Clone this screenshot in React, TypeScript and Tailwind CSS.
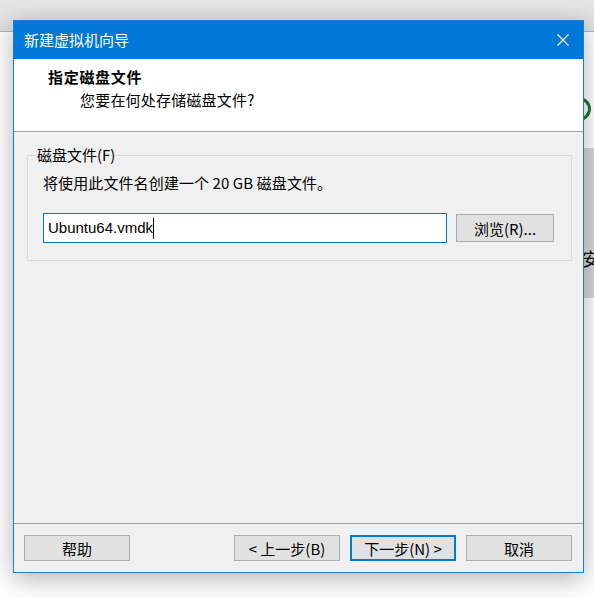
export default function App() {
  const btn =
    "h-[26px] w-[106px] flex items-center justify-center bg-[#e1e1e1] border border-[#adadad] text-[15px] text-black leading-none";
  return (
    <div className="relative w-[594px] h-[598px] overflow-hidden bg-white font-['Noto_Sans_CJK_SC','Microsoft_YaHei',sans-serif]">
      {/* background application */}
      <div className="h-[32px] bg-gradient-to-b from-[#e6e6e6] to-[#dedede] border-b border-[#a3b8cc]" />
      <div className="flex justify-end">
        <div className="w-[28px] flex flex-col">
          <div className="h-[65px]" />
          <div className="ml-[1px] w-[24px] h-[24px] rounded-full border-[3px] border-[#1f7a3d]" />
          <div className="h-[27px]" />
          <div className="h-[150px] bg-[#d6d6d6] flex flex-col justify-end pb-[30px] pl-[16px]">
            <span className="text-[18px] leading-[20px] text-[#111]">安</span>
          </div>
        </div>
      </div>

      {/* dialog window */}
      <div className="absolute left-[13px] top-[20px] w-[571px] h-[553px] border border-[#1a7fd4] bg-[#f0f0f0] flex flex-col shadow-[0_6px_24px_rgba(0,0,0,0.3)]">
        {/* title bar */}
        <div className="h-[38px] shrink-0 bg-[#0078d7] flex items-center justify-between pl-[10px] pr-[14px]">
          <span className="text-white text-[15px] leading-[20px]">新建虚拟机向导</span>
          <svg width="12" height="12" viewBox="0 0 12 12">
            <path d="M0.5 0.5 L11.5 11.5 M11.5 0.5 L0.5 11.5" stroke="white" strokeWidth="1.1" />
          </svg>
        </div>
        {/* header */}
        <div className="h-[73px] shrink-0 bg-white border-b border-[#a0a0a0] flex flex-col pt-[8px]">
          <div className="pl-[34px] text-[15px] leading-[20px] font-bold tracking-[0.7px] text-black">指定磁盘文件</div>
          <div className="pl-[66px] mt-[3px] text-[15px] leading-[20px] tracking-[0.2px] text-black">您要在何处存储磁盘文件?</div>
        </div>
        {/* body */}
        <div className="flex-1 pt-[23px] pl-[13px] pr-[11px]">
          <div className="relative h-[106px] border border-[#dcdcdc] pt-[17px] pl-[15px]">
            <span className="absolute left-[8px] top-[-11px] px-[1px] bg-[#f0f0f0] text-[15px] leading-[20px] text-black">
              磁盘文件(F)
            </span>
            <div className="text-[15px] leading-[20px] tracking-[0.1px] text-black">将使用此文件名创建一个 20 GB 磁盘文件。</div>
            <div className="mt-[20px] flex items-center gap-[9px]">
              <div className="w-[404px] h-[30px] bg-white border border-[#0078d7] flex items-center pl-[4px]">
                <span className="font-['Liberation_Sans',Arial,sans-serif] text-[15px] leading-[20px] text-black">Ubuntu64.vmdk</span>
                <span className="w-[1px] h-[21px] bg-black" />
              </div>
              <div className="h-[28px] w-[98px] flex items-center justify-center bg-[#e1e1e1] border border-[#adadad] text-[15px] text-black leading-none">
                浏览(R)...
              </div>
            </div>
          </div>
        </div>
        {/* footer */}
        <div className="h-[49px] shrink-0 border-t border-[#a0a0a0] flex items-start pt-[11px] pl-[10px] pr-[11px]">
          <div className={btn}>帮助</div>
          <div className="flex-1" />
          <div className="flex gap-[10px]">
            <div className={btn}>&lt; 上一步(B)</div>
            <div className="h-[26px] w-[106px] flex items-center justify-center bg-[#e1e1e1] border-2 border-[#0078d7] text-[15px] text-black leading-none">
              下一步(N) &gt;
            </div>
            <div className={btn}>取消</div>
          </div>
        </div>
      </div>
    </div>
  );
}
